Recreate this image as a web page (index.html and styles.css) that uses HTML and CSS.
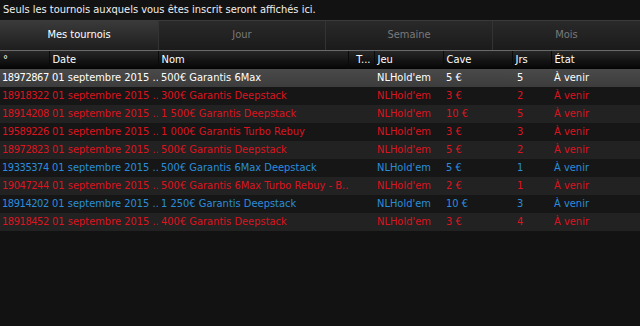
FILE: index.html
```html
<!DOCTYPE html>
<html>
<head>
	<meta charset="utf-8">
	<title>Mes tournois</title>
	<link rel="stylesheet" href="styles.css">
</head>
<body>
	<p class="notice">Seuls les tournois auxquels vous êtes inscrit seront affichés ici.</p>

	<nav class="tabs">
		<a class="tab current">Mes tournois</a>
		<a class="tab">Jour</a>
		<a class="tab">Semaine</a>
		<a class="tab">Mois</a>
	</nav>

	<table class="list">
		<colgroup>
			<col class="c-id"><col class="c-date"><col class="c-nom"><col class="c-t">
			<col class="c-jeu"><col class="c-cave"><col class="c-jrs"><col class="c-etat">
		</colgroup>
		<thead>
			<tr>
				<th>°</th><th>Date</th><th>Nom</th><th>T...</th><th>Jeu</th><th>Cave</th><th>Jrs</th><th>État</th>
			</tr>
		</thead>
		<tbody>
			<tr class="selected">
				<td class="id">18972867</td><td>01 septembre 2015 ..</td><td>500€ Garantis 6Max</td><td></td><td>NLHold'em</td><td>5 €</td><td class="num">5</td><td>À venir</td>
			</tr>
			<tr class="red">
				<td class="id">18918322</td><td>01 septembre 2015 ..</td><td>300€ Garantis Deepstack</td><td></td><td>NLHold'em</td><td>3 €</td><td class="num">2</td><td>À venir</td>
			</tr>
			<tr class="red">
				<td class="id">18914208</td><td>01 septembre 2015 ..</td><td>1 500€ Garantis Deepstack</td><td></td><td>NLHold'em</td><td>10 €</td><td class="num">5</td><td>À venir</td>
			</tr>
			<tr class="red">
				<td class="id">19589226</td><td>01 septembre 2015 ..</td><td>1 000€ Garantis Turbo Rebuy</td><td></td><td>NLHold'em</td><td>3 €</td><td class="num">3</td><td>À venir</td>
			</tr>
			<tr class="red">
				<td class="id">18972823</td><td>01 septembre 2015 ..</td><td>500€ Garantis Deepstack</td><td></td><td>NLHold'em</td><td>5 €</td><td class="num">2</td><td>À venir</td>
			</tr>
			<tr class="blue">
				<td class="id">19335374</td><td>01 septembre 2015 ..</td><td>500€ Garantis 6Max Deepstack</td><td></td><td>NLHold'em</td><td>5 €</td><td class="num">1</td><td>À venir</td>
			</tr>
			<tr class="red">
				<td class="id">19047244</td><td>01 septembre 2015 ..</td><td>500€ Garantis 6Max Turbo Rebuy - B..</td><td></td><td>NLHold'em</td><td>2 €</td><td class="num">1</td><td>À venir</td>
			</tr>
			<tr class="blue">
				<td class="id">18914202</td><td>01 septembre 2015 ..</td><td>1 250€ Garantis Deepstack</td><td></td><td>NLHold'em</td><td>10 €</td><td class="num">3</td><td>À venir</td>
			</tr>
			<tr class="red">
				<td class="id">18918452</td><td>01 septembre 2015 ..</td><td>400€ Garantis Deepstack</td><td></td><td>NLHold'em</td><td>3 €</td><td class="num">4</td><td>À venir</td>
			</tr>
		</tbody>
	</table>
</body>
</html>
```

FILE: styles.css
```css
body{
	font: 11px/1.5 "DejaVu Sans Condensed", "DejaVu Sans", sans-serif;
	margin: 0;
	padding: 0;
	background: #121212;
	color: #ffffff;
	height: 326px;
	overflow: hidden;
}

/* Notice */
.notice{
	margin: 0;
	padding: 1px 3px 0;
	height: 19px;
	line-height: 18px;
	font-size: 11px;
	color: #f0f0f0;
}

/* Tabs */
.tabs{
	display: flex;
	height: 29px;
	border-top: 1px solid #3a3a3a;
	border-bottom: 1px solid #6a6a6a;
	background: linear-gradient(#292929, #1b1b1b);
}

.tab{
	flex: 0 0 auto;
	display: flex;
	align-items: center;
	justify-content: center;
	color: #7a7a7a;
	border-right: 1px solid #333333;
	text-decoration: none;
}

.tab:nth-child(1){ width: 158px; }
.tab:nth-child(2){ width: 166px; }
.tab:nth-child(3){ width: 166px; }
.tab:nth-child(4){ flex: 1; border-right: none; }

.tab.current{
	background: linear-gradient(#3a3a3a, #1e1e1e);
	color: #ffffff;
}

/* List */
.list{
	width: 640px;
	table-layout: fixed;
	border-collapse: collapse;
}

.c-id{ width: 49px; }
.c-date{ width: 109px; }
.c-nom{ width: 190px; }
.c-t{ width: 26px; }
.c-jeu{ width: 69px; }
.c-cave{ width: 69px; }
.c-jrs{ width: 39px; }
.c-etat{ width: 89px; }

.list th{
	height: 18px;
	padding: 0 0 0 3px;
	text-align: left;
	font-weight: normal;
	color: #ffffff;
	background: linear-gradient(#262626, #050505);
	border-right: 1px solid #0a0a0a;
	white-space: nowrap;
	overflow: hidden;
}

.list th:nth-child(4){
	text-align: right;
	padding-right: 3px;
}

.list td{
	height: 18px;
	padding: 0 0 0 3px;
	white-space: nowrap;
	overflow: hidden;
}

.list td.id{
	padding-left: 2px;
	letter-spacing: -0.45px;
}

.list td.num{
	padding-left: 5px;
}

.list tbody tr:nth-child(odd){ background: #222222; }
.list tbody tr:nth-child(even){ background: #161616; }

.list tr.selected{
	background: linear-gradient(#4a4a4a, #3c3c3c) !important;
	color: #ffffff;
}

.list tr.red{ color: #dc1420; }
.list tr.blue{ color: #2a8ddb; }
```
